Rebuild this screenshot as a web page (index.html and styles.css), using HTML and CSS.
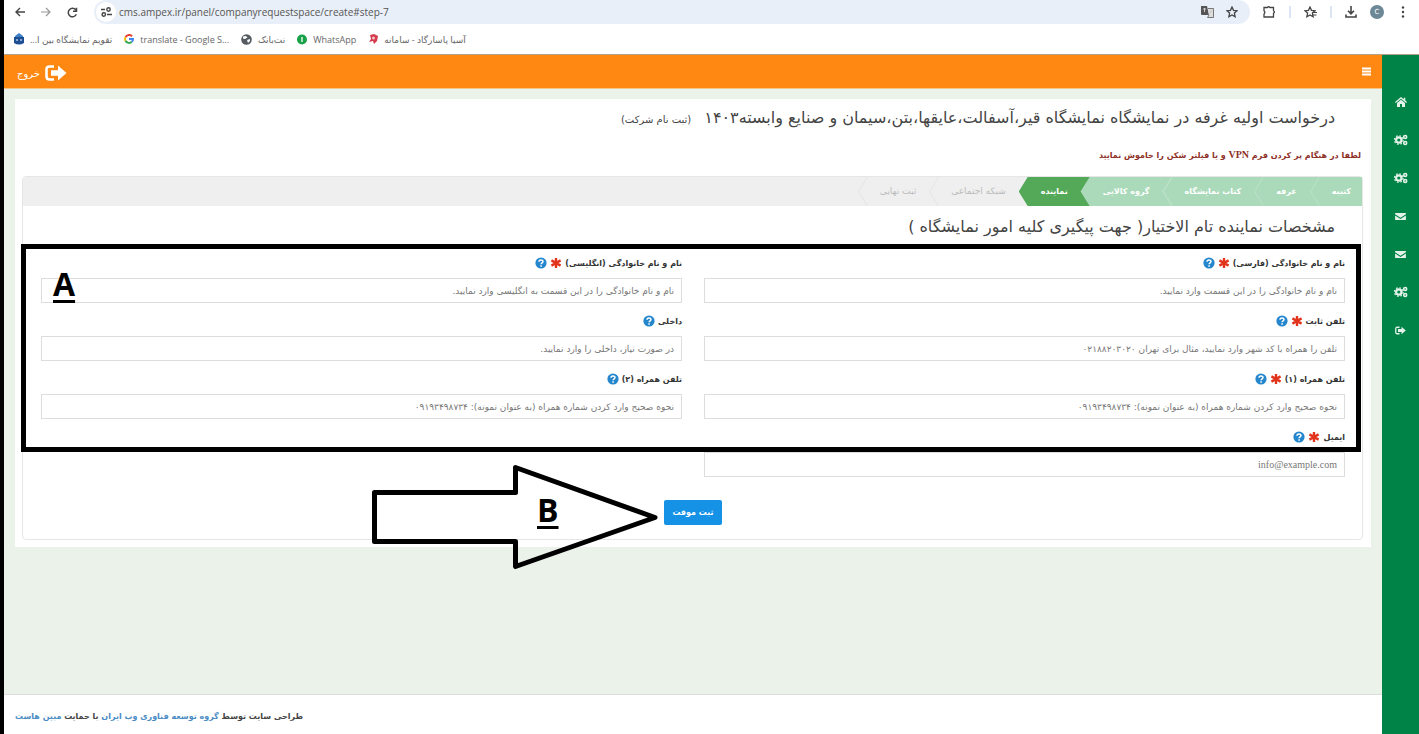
FILE: index.html
```html
<!DOCTYPE html>
<html lang="fa">
<head>
    <meta charset="UTF-8">
    <meta name="viewport" content="width=device-width, initial-scale=1.0">
    <title>cms.ampex.ir</title>
    <link rel="stylesheet" href="styles.css">
</head>
<body>
    <!-- Shared icons -->
    <svg class="sprite" aria-hidden="true">
        <symbol id="star" viewBox="0 0 12 12"><path d="M6 1l1.5 3.3 3.5.4-2.6 2.4.7 3.6L6 8.9l-3.1 1.8.7-3.6L1 4.7l3.5-.4z" fill="none" stroke="currentColor" stroke-width="1.3"/></symbol>
        <symbol id="required" viewBox="0 0 12 12"><path d="M6 1v10M1.4 3.4l9.2 5.2M10.6 3.4L1.4 8.6" stroke="#e2331d" stroke-width="2.4"/></symbol>
        <symbol id="help" viewBox="0 0 12 12"><circle cx="6" cy="6" r="5.6" fill="#2486cc"/><path d="M4 4.7C4 2.5 8 2.4 8 4.6 8 5.9 6.1 5.8 6.1 7.3M6.1 8.3v1.4" fill="none" stroke="#fff" stroke-width="1.5"/></symbol>
        <symbol id="gears" viewBox="0 0 14 12"><circle cx="4.8" cy="6" r="2.7" fill="none" stroke="currentColor" stroke-width="2.2"/><circle cx="4.8" cy="6" r="4.3" fill="none" stroke="currentColor" stroke-width="1.2" stroke-dasharray="1.7 1.68"/><circle cx="11.2" cy="3" r="1.5" fill="none" stroke="currentColor" stroke-width="1.6" /><circle cx="11.2" cy="9" r="1.5" fill="none" stroke="currentColor" stroke-width="1.6"/></symbol>
        <symbol id="mail" viewBox="0 0 12 10"><path d="M0 1h12v1.6L6 6.4 0 2.6zM0 4l6 3.7L12 4v5H0z" fill="currentColor"/></symbol>
        <symbol id="exit" viewBox="0 0 22 16"><path d="M9 1.5H4.5Q1.5 1.5 1.5 4.5v7q0 3 3 3H9" fill="none" stroke="currentColor" stroke-width="2.6"/><path d="M6 5.2h7V.5L21.5 8 13 15.500v-4.700H6z" fill="currentColor"/></symbol>
        <symbol id="chevron" viewBox="0 0 10 30"><path d="M9.500 0L.5 15l9 15" fill="none" stroke="currentColor"/></symbol>
    </svg>

    <div class="browser-bar">
        <button class="nav-btn" aria-label="Back"><svg width="10" height="10" viewBox="0 0 10 10"><path d="M10 5H1M5 1L1 5l4 4" fill="none" stroke="#444" stroke-width="1.4"/></svg></button>
        <button class="nav-btn" aria-label="Forward"><svg width="10" height="10" viewBox="0 0 10 10"><path d="M0 5h9M5 1l4 4-4 4" fill="none" stroke="#999" stroke-width="1.2"/></svg></button>
        <button class="nav-btn" aria-label="Reload"><svg width="11" height="11" viewBox="0 0 11 11"><path d="M9.300 7.300A4.200 4.200 0 1 1 8.800 3M9.500.8v3.500H6" fill="none" stroke="#444" stroke-width="1.5"/></svg></button>
        <div class="address">
            <span class="site-info"><svg width="11" height="10" viewBox="0 0 11 10"><path d="M0 2.500h4M6 7.500h5" stroke="#444" stroke-width="1.500"/><circle cx="7.500" cy="2.500" r="1.700" fill="none" stroke="#444" stroke-width="1.400"/><circle cx="2.800" cy="7.500" r="1.700" fill="none" stroke="#444" stroke-width="1.400"/></svg></span>
            <input type="text" aria-label="Address" value="cms.ampex.ir/panel/companyrequestspace/create#step-7">
            <svg width="13" height="12" viewBox="0 0 13 12"><path d="M0 0h6l2 9H1Q0 9 0 8z" fill="#555"/><path d="M7 2.500h5.500v9H6.500l1.500-2.500" fill="#ddd" stroke="#777"/><path d="M2 3h3M3.500 2v4M8.500 5h3M10 5l-1.500 3" stroke="#ccc" fill="none"/></svg>
            <svg width="12" height="12"><use href="#star"/></svg>
        </div>
        <svg width="13" height="12" viewBox="0 0 13 12"><path d="M1 1.500h3.500q1-1.500 2.500 0h3.500v3.300q1.800 1 0 2.400V11H1V8q1.700-1.500 0-3.200z" fill="none" stroke="#444" stroke-width="1.300"/></svg>
        <span class="divider"></span>
        <svg width="13" height="12" viewBox="0 0 13 12"><use href="#star" width="12" height="12"/><path d="M8 6.500h5M8.500 9h4" stroke="#444"/></svg>
        <span class="divider"></span>
        <svg width="12" height="12" viewBox="0 0 12 12"><path d="M6 0v7.500M3 4.800l3 3 3-3M1 8.500V11h10V8.500" fill="none" stroke="#444" stroke-width="1.600"/></svg>
        <span class="avatar">C</span>
        <svg class="more" width="4" height="12" viewBox="0 0 4 12"><circle cx="2" cy="1.500" r="1.200" fill="#444"/><circle cx="2" cy="6" r="1.200" fill="#444"/><circle cx="2" cy="10.500" r="1.200" fill="#444"/></svg>
    </div>

    <div class="bookmarks">
        <a href="#"><svg width="10" height="12" viewBox="0 0 10 12"><path d="M1 3l4-3 4 3v2H1z" fill="#3d7fc4"/><path d="M0 4h10v6q-5 3-10 0z" fill="#1c4f94"/><path d="M3 6v2M7 6v2" stroke="#fff"/></svg><span dir="rtl">تقویم نمایشگاه بین ا...</span></a>
        <a href="#"><svg width="10" height="10" viewBox="0 0 10 10" fill="none" stroke-width="2"><path d="M8 2.200A4 4 0 0 0 1.500 3.200" stroke="#e94235"/><path d="M1.500 3.200a4 4 0 0 0 0 3.600" stroke="#fabb05"/><path d="M1.500 6.800A4 4 0 0 0 7.800 7.800" stroke="#34a853"/><path d="M7.800 7.800A4 4 0 0 0 9 5H5" stroke="#4285f4"/></svg><span>translate - Google S...</span></a>
        <a href="#"><svg width="11" height="11" viewBox="0 0 11 11"><circle cx="5.500" cy="5.500" r="5.300" fill="#555b60"/><path d="M2 2.500l3-.5 1.500 1.500L4 5 2 4.500zM6 6l3-1v2L7 9zM3 7l2 2" fill="#fff"/></svg><span dir="rtl">نت‌بانک</span></a>
        <a href="#"><svg width="10" height="11" viewBox="0 0 10 11"><circle cx="5" cy="5.500" r="5" fill="#18a149"/><path d="M5 3v5" stroke="#fff" stroke-width="1.300"/></svg><span>WhatsApp</span></a>
        <a href="#"><svg width="10" height="10" viewBox="0 0 10 10"><path d="M2 1l4-1 4 2-1 5-3 3-1-3-4 1 2-3z" fill="#d43b4c"/><circle cx="5.500" cy="4" r="1.500" fill="#f5c4c9"/></svg><span dir="rtl">آسیا پاسارگاد - سامانه</span></a>
    </div>

    <div class="app" dir="rtl">
        <nav class="side-bar">
            <a href="#" aria-label="خانه"><svg width="12" height="10" viewBox="0 0 12 10"><path d="M6 0L0 5l.8.900L6 1.700l5.200 4.200.8-.9-1.700-1.500V.8H8.800v1.500z" fill="currentColor"/><path d="M6 2.800L2 6v4h3V7h2v3h3V6z" fill="currentColor"/></svg></a>
            <a href="#" aria-label="تنظیمات"><svg width="14" height="12"><use href="#gears"/></svg></a>
            <a href="#" aria-label="تنظیمات"><svg width="14" height="12"><use href="#gears"/></svg></a>
            <a href="#" aria-label="پیام"><svg width="11" height="9"><use href="#mail"/></svg></a>
            <a href="#" aria-label="پیام"><svg width="11" height="9"><use href="#mail"/></svg></a>
            <a href="#" aria-label="تنظیمات"><svg width="14" height="12"><use href="#gears"/></svg></a>
            <a href="#" aria-label="خروج"><svg width="11" height="9"><use href="#exit"/></svg></a>
        </nav>

        <div class="page">
            <header class="top-bar">
                <button class="menu-btn" aria-label="منو"><svg width="9" height="9" viewBox="0 0 9 9"><path d="M0 1.500h9M0 4.500h9M0 7.500h9" stroke="#fff" stroke-width="2"/></svg></button>
                <a href="#" class="logout"><svg width="22" height="16"><use href="#exit"/></svg>خروج</a>
            </header>

            <main class="content">
                <div class="card">
                    <h1>درخواست اولیه غرفه در نمایشگاه نمایشگاه قیر،آسفالت،عایقها،بتن،سیمان و صنایع وابسته۱۴۰۳ <small>(ثبت نام شرکت)</small></h1>
                    <p class="warning">لطفا در هنگام پر کردن فرم <span class="latin">VPN</span> و یا فیلتر شکن را خاموش نمایید</p>

                    <div class="wizard">
                        <ul class="steps">
                            <li class="done">کتیبه<svg class="chevron"><use href="#chevron"/></svg></li>
                            <li class="done">غرفه<svg class="chevron"><use href="#chevron"/></svg></li>
                            <li class="done">کتاب نمایشگاه<svg class="chevron"><use href="#chevron"/></svg></li>
                            <li class="done">گروه کالایی</li>
                            <li class="active">نماینده</li>
                            <li>شبکه اجتماعی<svg class="chevron"><use href="#chevron"/></svg></li>
                            <li>ثبت نهایی<svg class="chevron"><use href="#chevron"/></svg></li>
                        </ul>

                        <form class="step-form">
                            <h2>مشخصات نماینده تام الاختیار( جهت پیگیری کلیه امور نمایشگاه )</h2>
                            <div class="fields">
                                <div class="field">
                                    <label for="name-fa">نام و نام خانوادگی (فارسی) <svg><use href="#required"/></svg> <svg><use href="#help"/></svg></label>
                                    <input type="text" id="name-fa" placeholder="نام و نام خانوادگی را در این قسمت وارد نمایید.">
                                </div>
                                <div class="field">
                                    <label for="name-en">نام و نام خانوادگی (انگلیسی) <svg><use href="#required"/></svg> <svg><use href="#help"/></svg></label>
                                    <input type="text" id="name-en" placeholder="نام و نام خانوادگی را در این قسمت به انگلیسی وارد نمایید.">
                                </div>
                                <div class="field">
                                    <label for="phone">تلفن ثابت <svg><use href="#required"/></svg> <svg><use href="#help"/></svg></label>
                                    <input type="text" id="phone" placeholder="تلفن را همراه با کد شهر وارد نمایید، مثال برای تهران ۰۲۱۸۸۲۰۳۰۲۰">
                                </div>
                                <div class="field">
                                    <label for="ext">داخلی <svg><use href="#help"/></svg></label>
                                    <input type="text" id="ext" placeholder="در صورت نیاز، داخلی را وارد نمایید.">
                                </div>
                                <div class="field">
                                    <label for="mobile1">تلفن همراه (۱) <svg><use href="#required"/></svg> <svg><use href="#help"/></svg></label>
                                    <input type="text" id="mobile1" placeholder="نحوه صحیح وارد کردن شماره همراه (به عنوان نمونه): ۰۹۱۹۳۴۹۸۷۳۴">
                                </div>
                                <div class="field">
                                    <label for="mobile2">تلفن همراه (۲) <svg><use href="#help"/></svg></label>
                                    <input type="text" id="mobile2" placeholder="نحوه صحیح وارد کردن شماره همراه (به عنوان نمونه): ۰۹۱۹۳۴۹۸۷۳۴">
                                </div>
                                <div class="field">
                                    <label for="email">ایمیل <svg><use href="#required"/></svg> <svg><use href="#help"/></svg></label>
                                    <input type="email" id="email" class="latin" dir="ltr" placeholder="info@example.com">
                                </div>
                                <div class="mark-box"><b class="mark">A</b></div>
                            </div>

                            <div class="actions">
                                <button type="button" class="save-btn">ثبت موقت</button>
                                <div class="mark-arrow">
                                    <svg width="288" height="104" viewBox="0 0 288 104"><path d="M3.500 27.500h141v-25L284 52.500l-139.500 49v-25H3.500z" fill="none" stroke="#000" stroke-width="5" stroke-linejoin="round"/></svg>
                                    <b class="mark">B</b>
                                </div>
                            </div>
                        </form>
                    </div>
                </div>
            </main>

            <footer class="footer">طراحی سایت توسط <a href="#">گروه توسعه فناوری وب ایران</a> با حمایت <a href="#">مبین هاست</a></footer>
        </div>
    </div>
</body>
</html>
```
FILE: styles.css
```css
* {
    box-sizing: border-box;
}

body {
    display: flex;
    flex-direction: column;
    min-height: 100vh;
    margin: 0;
    border-left: 4px solid #000;
    background: #fff;
    color: #444;
    font-family: "DejaVu Sans", sans-serif;
    font-size: 9px;
}

a {
    color: inherit;
    text-decoration: none;
}

button {
    padding: 0;
    border: 0;
    background: none;
    font-family: inherit;
    cursor: pointer;
}

.sprite {
    position: absolute;
    width: 0;
    height: 0;
}

/* Browser toolbar */
.browser-bar {
    display: flex;
    align-items: center;
    gap: 13px;
    height: 24px;
    padding: 0 14px 0 11px;
}

.nav-btn {
    display: flex;
    margin-right: 3px;
}

.address {
    display: flex;
    flex: 1;
    align-items: center;
    gap: 12px;
    height: 24px;
    padding: 0 12px 0 2px;
    border-radius: 12px;
    background: #e9eff8;
}

.site-info {
    display: flex;
    align-items: center;
    justify-content: center;
    width: 20px;
    height: 20px;
    margin-right: -9px;
    border-radius: 50%;
    background: #fff;
}

.address input {
    flex: 1;
    padding: 0;
    border: 0;
    background: none;
    color: #555;
    font-family: "Open Sans", sans-serif;
    font-size: 10px;
}

.divider {
    width: 2px;
    height: 12px;
    background: #dbe5f5;
}

.avatar {
    width: 14px;
    border-radius: 50%;
    background: #6c8796;
    color: #fff;
    font-size: 7px;
    line-height: 14px;
    text-align: center;
}

.more {
    margin-left: 4px;
}

.bookmarks {
    display: flex;
    align-items: center;
    gap: 12px;
    height: 31px;
    padding-left: 10px;
    border-bottom: 1px solid #b5a08a;
    color: #666;
    font-family: "Open Sans", "DejaVu Sans", sans-serif;
    font-size: 9px;
}

.bookmarks a {
    display: flex;
    align-items: center;
    gap: 6px;
}

/* Layout */
.app {
    display: flex;
    flex: 1;
}

.side-bar {
    display: flex;
    flex-direction: column;
    width: 37px;
    padding-top: 28px;
    background: #008346;
    color: #e4f3ea;
}

.side-bar a {
    display: flex;
    align-items: center;
    justify-content: center;
    height: 38px;
}

.page {
    display: flex;
    flex: 1;
    flex-direction: column;
    min-width: 0;
}

.top-bar {
    display: flex;
    align-items: center;
    justify-content: space-between;
    height: 34px;
    padding: 0 11px 0 13px;
    border-bottom: 1px solid #f5c488;
    background: #fe8812;
    color: #fff;
}

.logout {
    display: flex;
    align-items: center;
    gap: 5px;
    padding-top: 3px;
    font-size: 10px;
}

.content {
    flex: 1;
    padding: 10px 11px;
    background: #ebf2ea;
}

.card {
    padding: 6px 8px 7px 7px;
    background: #fff;
}

h1,
h2 {
    margin: 0;
    color: #444;
    font-size: 16px;
    font-weight: normal;
    line-height: 26px;
}

h1 {
    padding: 0 28px;
}

h1 small {
    margin-right: 8px;
    font-size: 10px;
    line-height: 1;
}

.warning {
    margin: 15px 2px 10px;
    color: #8e3129;
    font-size: 8px;
    font-weight: bold;
    line-height: 20px;
}

.latin {
    font-family: "Liberation Serif", serif;
}

.warning .latin {
    font-size: 10px;
    line-height: 1;
}

/* Wizard */
.wizard {
    border: 1px solid #e6e6e6;
    border-radius: 4px;
}

.steps {
    display: flex;
    margin: 0;
    padding: 0;
    background: #efefef;
    color: #bbb;
    line-height: 29px;
    list-style: none;
}

.steps li {
    position: relative;
    margin-right: -9px;
    padding: 0 22px;
}

.steps li:first-child {
    margin-right: 0;
    padding-right: 11px;
}

.steps .done {
    background: #abdaba;
    color: #fff;
    font-size: 8px;
    font-weight: bold;
}

.steps .active {
    background: #53a957;
    color: #fff;
    font-size: 8px;
    font-weight: bold;
}

.steps .active,
.steps .done:not(:first-child) {
    clip-path: polygon(9px 0, 100% 0, calc(100% - 9px) 50%, 100% 100%, 9px 100%, 0 50%);
}

.chevron {
    position: absolute;
    top: 0;
    left: 0;
    width: 10px;
    height: 29px;
    color: #e4e4e4;
}

.done .chevron {
    color: #bce3c8;
}

.step-form {
    padding: 8px 17px 14px 18px;
}

h2 {
    padding: 0 10px;
}

.fields {
    display: grid;
    position: relative;
    grid-template-columns: 1fr 1fr;
    gap: 10px 22px;
    margin-top: 15px;
}

.field {
    display: flex;
    flex-direction: column;
    gap: 7px;
}

.field label {
    display: flex;
    align-items: center;
    gap: 3px;
    height: 16px;
    color: #333;
    font-size: 8px;
    font-weight: bold;
}

.field label svg {
    width: 12px;
    height: 12px;
}

.field input {
    width: 100%;
    height: 25px;
    padding: 0 7px;
    border: 1px solid #ddd;
    background: #fff;
    font-family: "DejaVu Sans", sans-serif;
    font-size: 9px;
    text-align: right;
}

.field input::placeholder {
    color: #777;
}

.field .latin {
    font-family: "Liberation Serif", serif;
    font-size: 10px;
}

.actions {
    display: flex;
    position: relative;
    justify-content: center;
    width: 58px;
    margin: 23px auto 0;
}

.save-btn {
    width: 58px;
    height: 25px;
    border-radius: 2px;
    background: #1592e6;
    color: #fff;
    font-size: 8px;
    font-weight: bold;
}

/* Marks drawn over the form */
.mark-box {
    position: absolute;
    top: -11px;
    right: -16px;
    bottom: 25px;
    left: -20px;
    padding: 14px 27px;
    border: 5px solid #000;
    direction: ltr;
    pointer-events: none;
}

.mark {
    color: #000;
    font-family: "Open Sans", sans-serif;
    font-size: 32px;
    line-height: 42px;
    text-decoration: underline;
    text-decoration-thickness: 3px;
    text-underline-offset: 4px;
}

.mark-arrow {
    position: absolute;
    top: -35px;
    right: 63px;
    direction: ltr;
}

.mark-arrow .mark {
    position: absolute;
    top: 24px;
    left: 166px;
}

.footer {
    height: 40px;
    padding: 0 11px;
    border-top: 1px solid #ddd;
    background: #fff;
    font-size: 8px;
    font-weight: bold;
    line-height: 44px;
    direction: rtl;
    text-align: left;
}

.footer a {
    color: #4a8cc4;
}
```
